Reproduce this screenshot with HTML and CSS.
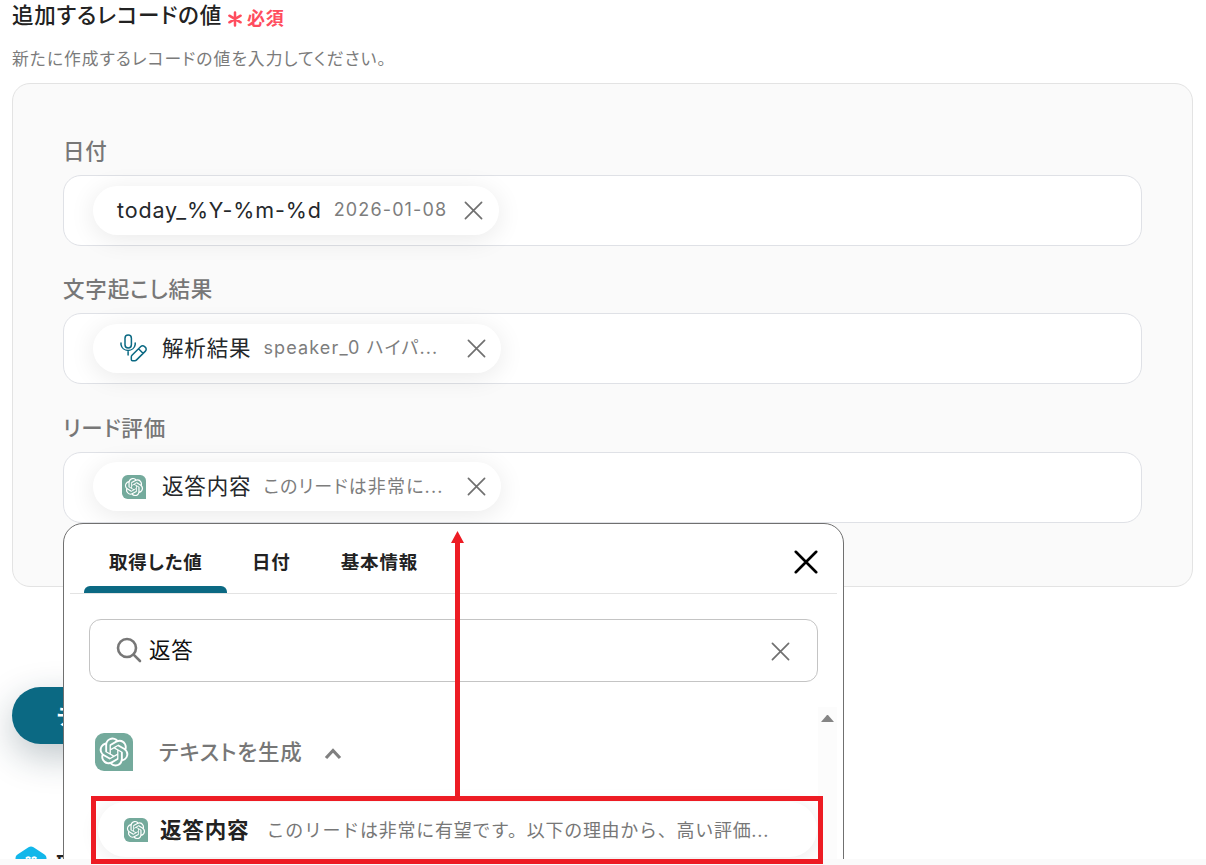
FILE: index.html
```html
<!DOCTYPE html>
<html lang="ja">
<head>
    <meta charset="UTF-8">
    <meta name="viewport" content="width=device-width, initial-scale=1.0">
    <title>追加するレコードの値</title>
    <link rel="stylesheet" href="styles.css">
</head>
<body>
    <svg class="sprite" aria-hidden="true">
        <symbol id="close" viewBox="0 0 20 20">
            <path d="M1.5 1.5l17 17M18.5 1.5l-17 17" fill="none" stroke="currentColor" stroke-linecap="round"/>
        </symbol>
        <symbol id="gpt" viewBox="0 0 38 38">
            <path d="M9 0h20a9 9 0 0 1 9 9v29H9a9 9 0 0 1-9-9V9a9 9 0 0 1 9-9z" fill="#74aa9c"/>
            <path transform="translate(4.6 4.6) scale(1.2)" fill="#fff" d="M22.2819 9.8211a5.9847 5.9847 0 0 0-.5157-4.9108 6.0462 6.0462 0 0 0-6.5098-2.9A6.0651 6.0651 0 0 0 4.9807 4.1818a5.9847 5.9847 0 0 0-3.9977 2.9 6.0462 6.0462 0 0 0 .7427 7.0966 5.98 5.98 0 0 0 .511 4.9107 6.051 6.051 0 0 0 6.5146 2.9001A5.9847 5.9847 0 0 0 13.2599 24a6.0557 6.0557 0 0 0 5.7718-4.2058 5.9894 5.9894 0 0 0 3.9977-2.9001 6.0557 6.0557 0 0 0-.7475-7.0729zm-9.022 12.6081a4.4755 4.4755 0 0 1-2.8764-1.0408l.1419-.0804 4.7783-2.7582a.7948.7948 0 0 0 .3927-.6813v-6.7369l2.02 1.1686a.071.071 0 0 1 .038.052v5.5826a4.504 4.504 0 0 1-4.4945 4.4944zm-9.6607-4.1254a4.4708 4.4708 0 0 1-.5346-3.0137l.142.0852 4.783 2.7582a.7712.7712 0 0 0 .7806 0l5.8428-3.3685v2.3324a.0804.0804 0 0 1-.0332.0615L9.74 19.9502a4.4992 4.4992 0 0 1-6.1408-1.6464zM2.3408 7.8956a4.485 4.485 0 0 1 2.3655-1.9728V11.6a.7664.7664 0 0 0 .3879.6765l5.8144 3.3543-2.0201 1.1685a.0757.0757 0 0 1-.071 0l-4.8303-2.7865A4.504 4.504 0 0 1 2.3408 7.872zm16.5963 3.8558L13.1038 8.364 15.1192 7.2a.0757.0757 0 0 1 .071 0l4.8303 2.7913a4.4944 4.4944 0 0 1-.6765 8.1042v-5.6772a.79.79 0 0 0-.407-.667zm2.0107-3.0231l-.142-.0852-4.7735-2.7818a.7759.7759 0 0 0-.7854 0L9.409 9.2297V6.8974a.0662.0662 0 0 1 .0284-.0615l4.8303-2.7866a4.4992 4.4992 0 0 1 6.6802 4.66zM8.3065 12.863l-2.02-1.1638a.0804.0804 0 0 1-.038-.0567V6.0742a4.4992 4.4992 0 0 1 7.3757-3.4537l-.142.0805L8.704 5.459a.7948.7948 0 0 0-.3927.6813zm1.0976-2.3654l2.602-1.4998 2.6069 1.4998v2.9994l-2.5974 1.4997-2.6067-1.4997Z"/>
        </symbol>
    </svg>

    <div class="page">
        <div class="heading">
            <h2>追加するレコードの値</h2>
            <svg class="asterisk" viewBox="0 0 14 16"><path d="M7 1.5v13M1.4 4.7l11.2 6.6M12.6 4.7L1.4 11.3" stroke="#ff4d5e" stroke-width="2.5" stroke-linecap="round"/></svg>
            <span class="required">必須</span>
        </div>
        <p class="description">新たに作成するレコードの値を入力してください。</p>

        <div class="panel">
            <div class="field">
                <label>日付</label>
                <div class="field-box">
                    <div class="chip chip-date">
                        <span class="chip-name">today_%Y-%m-%d</span>
                        <span class="chip-value">2026-01-08</span>
                        <svg class="chip-close"><use href="#close"/></svg>
                    </div>
                </div>
            </div>
            <div class="field">
                <label>文字起こし結果</label>
                <div class="field-box">
                    <div class="chip">
                        <svg class="mic-icon" viewBox="0 0 28 28" fill="none" stroke="#0b6983" stroke-width="1.5" stroke-linecap="round" stroke-linejoin="round">
                            <rect x="5" y="1" width="6.4" height="13" rx="3.2"/>
                            <path d="M1 9v1.6a7.2 7 0 0 0 14.2 0V9M8.1 17.6V21"/>
                            <path d="M12 21.3l8.8-8.8a2.6 2.6 0 0 1 3.7 0l.9.9a2.6 2.6 0 0 1 0 3.7l-8.8 8.8c-.5.5-1 .8-1.7.8h-2.4a1.2 1.2 0 0 1-1.2-1.2V23c0-.7.2-1.2.7-1.7zM18.5 14.8l4.500 4.500"/>
                        </svg>
                        <span class="chip-name">解析結果</span>
                        <span class="chip-value">speaker_0 ハイパ...</span>
                        <svg class="chip-close"><use href="#close"/></svg>
                    </div>
                </div>
            </div>
            <div class="field">
                <label>リード評価</label>
                <div class="field-box">
                    <div class="chip">
                        <svg class="gpt-small"><use href="#gpt"/></svg>
                        <span class="chip-name">返答内容</span>
                        <span class="chip-value">このリードは非常に...</span>
                        <svg class="chip-close"><use href="#close"/></svg>
                    </div>
                </div>
            </div>
        </div>

        <button class="test-button">テスト</button>

        <div class="next-item">
            <svg class="app-icon" viewBox="0 0 32 32">
                <path d="M13.5 1.2a5 5 0 0 1 5 0l11 7.3a4 4 0 0 1 2 3.5v10a4 4 0 0 1-2 3.4l-11 5.4a5 5 0 0 1-5 0l-11-5.4a4 4 0 0 1-2-3.4V12a4 4 0 0 1 2-3.5z" fill="#12b7ea"/>
                <path d="M11 12.6c1.3-1.8 3.2-1.8 4.5 0M17 12.6c1.3-1.8 3.2-1.8 4.5 0" stroke="#fff" stroke-width="2" fill="none"/>
            </svg>
            <span>取</span>
        </div>

        <!-- 値の選択メニュー -->
        <div class="picker">
            <div class="tabs">
                <div class="tab active">取得した値</div>
                <div class="tab">日付</div>
                <div class="tab">基本情報</div>
                <svg class="picker-close"><use href="#close"/></svg>
            </div>
            <div class="search">
                <svg class="search-icon" viewBox="0 0 26 26" fill="none" stroke="#777" stroke-width="2.6" stroke-linecap="round">
                    <circle cx="11" cy="11" r="9"/><path d="M17.6 17.6L24 24"/>
                </svg>
                <span>返答</span>
                <svg class="search-clear"><use href="#close"/></svg>
            </div>
            <div class="results">
                <div class="results-list">
                    <div class="group">
                        <svg class="gpt-large"><use href="#gpt"/></svg>
                        <span>テキストを生成</span>
                        <svg class="caret" viewBox="0 0 18 12"><path d="M2 10l7-7.5L16 10" fill="none" stroke="#808080" stroke-width="3.2"/></svg>
                    </div>
                    <div class="result">
                        <svg class="gpt-small"><use href="#gpt"/></svg>
                        <b>返答内容</b>
                        <span class="result-value">このリードは非常に有望です。以下の理由から、高い評価...</span>
                    </div>
                </div>
                <div class="scrollbar"><div class="scroll-up"></div></div>
            </div>
        </div>
    </div>

    <!-- 強調表示 -->
    <div class="highlight"></div>
    <svg class="arrow" viewBox="0 0 13 268"><path d="M6.5 0L13 12H9v256H4V12H0z" fill="#ed1c24"/></svg>
</body>
</html>
```
FILE: styles.css
```css
* {
    box-sizing: border-box;
}

body {
    margin: 0;
    height: 865px;
    overflow: hidden;
    position: relative;
    background: #fafafa;
    color: #222;
    font-family: Inter, "Noto Sans CJK JP", sans-serif;
    font-feature-settings: "palt";
    letter-spacing: 0.053em;
}

svg {
    display: block;
    flex-shrink: 0;
}

.sprite {
    position: absolute;
    width: 0;
    height: 0;
}

.page {
    position: relative;
    height: 859px;
    padding: 0 13px 0 12px;
    overflow: hidden;
    background: #fff;
}

.heading {
    display: flex;
    align-items: center;
    height: 31px;
    white-space: nowrap;
}

h2 {
    margin: 0;
    font-size: 21.5px;
    font-weight: 500;
    line-height: 31px;
}

.asterisk {
    width: 14px;
    height: 16px;
    margin: 7px 5px 0 6px;
}

.required {
    margin-top: 3px;
    color: #ff4d5e;
    font-size: 18px;
    font-weight: 700;
}

.description {
    margin: 16px 0 11px;
    height: 25px;
    color: #7b7b7b;
    font-size: 16.8px;
    line-height: 25px;
    letter-spacing: 0.06em;
}

.panel {
    height: 504px;
    padding: 50px;
    border: 1px solid #e3e3e3;
    border-radius: 18px;
    background: #fafafa;
}

.field {
    height: 138.3px;
}

.field label {
    display: block;
    height: 41px;
    color: #777;
    font-size: 21.5px;
    font-weight: 500;
    line-height: 34px;
}

.field-box {
    display: flex;
    height: 71px;
    padding: 9.5px 29px;
    border: 1px solid #dfe1e6;
    border-radius: 18px;
    background: #fff;
}

.chip {
    display: flex;
    align-items: center;
    width: 408px;
    height: 49px;
    padding: 0 15px 0 27px;
    border-radius: 25px;
    background: #fff;
    box-shadow: 0 4px 26px rgba(0, 0, 0, 0.09);
    white-space: nowrap;
}

.chip-date {
    width: 406px;
    padding: 0 16px 0 24px;
}

.chip-name {
    margin-top: -4px;
    color: #25282b;
    font-size: 21.5px;
}

.chip-value {
    margin: -4px 0 0 12px;
    color: #7d7d7d;
    font-size: 18px;
    letter-spacing: 0.063em;
}

.chip-date .chip-name,
.chip-date .chip-value {
    margin-top: -1px;
}

.chip-close {
    width: 19px;
    height: 19px;
    margin-left: auto;
    color: #707070;
    stroke-width: 1.8;
}

.mic-icon {
    width: 28px;
    height: 28px;
    margin-right: 14px;
}

.gpt-small {
    width: 24px;
    height: 24px;
    margin: 0 16px 0 2px;
}

.test-button {
    display: block;
    width: 200px;
    height: 57px;
    margin-top: 100px;
    padding: 0 0 1px 44px;
    border: 0;
    border-radius: 29px;
    background: #0b6983;
    box-shadow: 0 12px 36px rgba(20, 50, 65, 0.28);
    color: #fff;
    font: 700 21px Inter, "Noto Sans CJK JP", sans-serif;
    text-align: left;
}

.next-item {
    display: flex;
    align-items: flex-start;
    gap: 9px;
    height: 13px;
    margin-top: 102px;
    padding-left: 3px;
    font-size: 20px;
    font-weight: 700;
}

.app-icon {
    width: 32px;
    height: 32px;
}

.next-item span {
    margin-top: 3px;
}

.picker {
    position: absolute;
    top: 523px;
    left: 63px;
    width: 781px;
    height: 500px;
    padding: 0 6px;
    border: 1px solid #707070;
    border-radius: 20px;
    background: #fff;
}

.tabs {
    display: flex;
    height: 70px;
    padding: 0 19px 0 14px;
    border-bottom: 1px solid #e3e3e3;
}

.tab {
    padding: 0 25px;
    font-size: 18.5px;
    font-weight: 700;
    line-height: 77px;
    white-space: nowrap;
}

.tab.active {
    display: flex;
    flex-direction: column;
    width: 143px;
}

.tab.active::after {
    content: "";
    height: 7px;
    margin: -15px -25px 0;
    border-radius: 6px 6px 0 0;
    background: #0b6983;
}

.picker-close {
    width: 24px;
    height: 24px;
    margin: 26px 0 0 auto;
    color: #000;
    stroke-width: 2.2;
}

.search {
    display: flex;
    align-items: center;
    height: 63px;
    margin: 25px 19px 0;
    padding: 0 27px 0 26px;
    border: 1px solid #c4c4c4;
    border-radius: 12px;
    color: #111;
    font-size: 21.5px;
}

.search span {
    margin-top: -4px;
}

.search-icon {
    width: 26px;
    height: 26px;
    margin: -2px 7px 0 0;
}

.search-clear {
    width: 19px;
    height: 19px;
    margin: 1px 0 0 auto;
    color: #707070;
    stroke-width: 1.8;
}

.results {
    display: flex;
    height: 200px;
    margin-top: 25px;
}

.results-list {
    width: 748px;
    padding: 26px 1px 0 25px;
    overflow: hidden;
}

.group {
    display: flex;
    align-items: center;
    height: 38px;
    color: #777;
    font-size: 21.5px;
    font-weight: 500;
}

.group span {
    margin-top: -4px;
}

.gpt-large {
    width: 38px;
    height: 38px;
    margin-right: 26px;
}

.caret {
    width: 18px;
    height: 12px;
    margin: 4px 0 0 21px;
}

.result {
    display: flex;
    align-items: center;
    height: 55px;
    margin: 31px 0 0 3px;
    padding-left: 24px;
    border-radius: 28px;
    box-shadow: 0 3px 20px rgba(0, 0, 0, 0.08);
    white-space: nowrap;
}

.result .gpt-small {
    margin-right: 12px;
}

.result b {
    margin-top: -2px;
    font-size: 21.5px;
    letter-spacing: 0.04em;
}

.result-value {
    margin: -2px 0 0 17px;
    color: #777;
    font-size: 18px;
    font-feature-settings: normal;
    letter-spacing: 0.04em;
}

.scrollbar {
    width: 19px;
    padding: 8px 3px;
    background: #fcfcfc;
}

.scroll-up {
    height: 7px;
    border: solid transparent;
    border-width: 0 6.5px 7px;
    border-bottom-color: #858585;
}

.highlight {
    position: absolute;
    top: 796px;
    left: 91px;
    width: 732px;
    height: 68px;
    border: 5px solid #ed1c24;
}

.arrow {
    position: absolute;
    top: 531px;
    left: 451px;
    width: 13px;
    height: 268px;
}
```
